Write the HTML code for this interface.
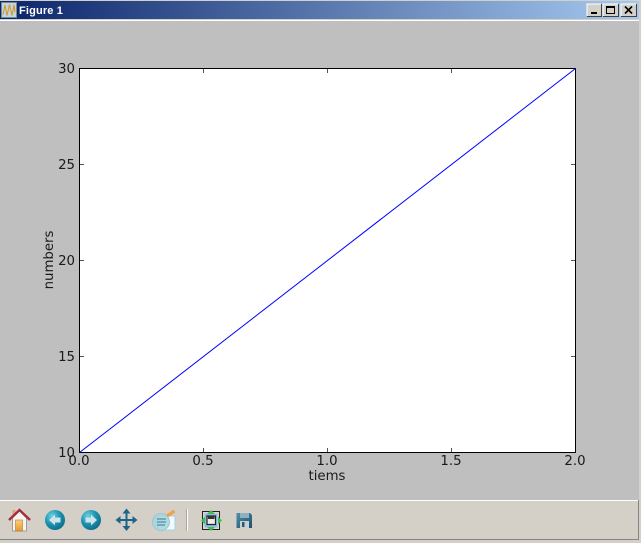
<!DOCTYPE html>
<html>
<head>
<meta charset="utf-8">
<style>
html,body{margin:0;padding:0;background:#bfbfbf}
body{width:641px;height:543px;overflow:hidden;position:relative}
svg{position:absolute;left:0;top:0}
text{font-family:"DejaVu Sans",sans-serif;font-size:13.3px;fill:#1a1a1a}
.t{font-family:"Liberation Sans",sans-serif;font-size:11px;font-weight:bold;fill:#fff;letter-spacing:0.15px}
</style>
</head>
<body>
<svg width="641" height="543" viewBox="0 0 641 543" xmlns="http://www.w3.org/2000/svg">
<defs>
<linearGradient id="tb" x1="0" x2="1" y1="0" y2="0"><stop offset="0" stop-color="#0a246a"/><stop offset="1" stop-color="#a6caf0"/></linearGradient>
<radialGradient id="ball" cx="0.35" cy="0.3" r="0.8"><stop offset="0" stop-color="#6fd0e0"/><stop offset="0.5" stop-color="#1b93b0"/><stop offset="1" stop-color="#0c6585"/></radialGradient>
<linearGradient id="door" x1="0" x2="0" y1="0" y2="1"><stop offset="0" stop-color="#fbd27a"/><stop offset="1" stop-color="#e9962e"/></linearGradient>
<linearGradient id="disk" x1="0" x2="1" y1="0" y2="1"><stop offset="0" stop-color="#4f8fae"/><stop offset="1" stop-color="#1d4f6c"/></linearGradient>
</defs>
<rect width="641" height="543" fill="#bfbfbf"/>
<rect x="0" y="0" width="641" height="1" fill="#d4d0c8"/>
<rect x="0" y="1" width="641" height="18" fill="url(#tb)"/>
<rect x="0" y="19" width="641" height="1" fill="#d4d0c8"/>
<rect x="0" y="20" width="639" height="1" fill="#ffffff"/>
<rect x="639" y="0" width="2" height="543" fill="#d4d0c8"/>

<rect x="1.5" y="2.5" width="15" height="15" fill="#c3d6dc" stroke="#6d8a9c" stroke-width="1"/>
<path d="M3 14.5L5 5L7 15.5L9.5 4.5L12 15.5L14 5L15 12" fill="none" stroke="#d8961f" stroke-width="1"/>
<text class="t" x="19" y="14">Figure 1</text>

<g>
<rect x="587" y="4" width="14" height="12" fill="#d4d0c8"/>
<path d="M587 16V4H601" fill="none" stroke="#fff"/>
<path d="M587 16.5H601.5V4" fill="none" stroke="#404040"/>
<rect x="591" y="12" width="6" height="2" fill="#000"/>
<rect x="603" y="4" width="15" height="12" fill="#d4d0c8"/>
<path d="M603 16V4H618" fill="none" stroke="#fff"/>
<path d="M603 16.5H618.5V4" fill="none" stroke="#404040"/>
<rect x="606.5" y="6.5" width="8" height="7" fill="none" stroke="#000"/>
<rect x="606" y="6" width="9" height="2" fill="#000"/>
<rect x="621" y="4" width="15" height="12" fill="#d4d0c8"/>
<path d="M621 16V4H636" fill="none" stroke="#fff"/>
<path d="M621 16.5H636.5V4" fill="none" stroke="#404040"/>
<path d="M625 6.5L632 13.5M632 6.5L625 13.5" stroke="#000" stroke-width="1.6"/>
</g>

<rect x="79.5" y="68.5" width="496" height="384" fill="#fff" stroke="#000" stroke-width="1"/>
<path d="M79.5 452.5L575.5 68.5" stroke="#0000ff" stroke-width="1" fill="none"/>
<path d="M203.5 452V448M327.5 452V448M451.5 452V448M203.5 69V73M327.5 69V73M451.5 69V73M80 356.5H84M80 260.5H84M80 164.5H84M575 356.5H571M575 260.5H571M575 164.5H571" stroke="#555" stroke-width="1"/>

<g text-anchor="end">
<text x="75" y="73">30</text>
<text x="75" y="169">25</text>
<text x="75" y="265">20</text>
<text x="75" y="361">15</text>
<text x="75" y="457">10</text>
</g>
<g text-anchor="middle">
<text x="79" y="465">0.0</text>
<text x="203" y="465">0.5</text>
<text x="327" y="465">1.0</text>
<text x="451" y="465">1.5</text>
<text x="575" y="465">2.0</text>
<text x="327" y="480">tiems</text>
<text transform="translate(53,260) rotate(-90)">numbers</text>
</g>

<rect x="0" y="500" width="639" height="1" fill="#fff"/>
<rect x="0" y="501" width="639" height="38" fill="#d4d0c8"/>
<rect x="0" y="539" width="639" height="1" fill="#858585"/>
<rect x="638" y="500" width="1" height="40" fill="#858585"/>
<rect x="0" y="540" width="641" height="3" fill="#d4d0c8"/>

<!-- home -->
<rect x="12.5" y="510" width="3" height="7" fill="#d9a878"/>
<path d="M12.5 518L19.5 511L26.5 518V531H12.5Z" fill="#f4f4f2" stroke="#8a8a8a" stroke-width="0.8"/>
<path d="M9 520L19.5 510L30 520" fill="none" stroke="#a92a3c" stroke-width="2.4"/>
<rect x="15.5" y="520" width="7" height="11" fill="url(#door)" stroke="#b9772a" stroke-width="0.6"/>

<!-- back -->
<circle cx="55" cy="520" r="10" fill="url(#ball)"/>
<path d="M49 520L55 514.5V517.5H60.5V522.5H55V525.5Z" fill="#cfe3ea"/>
<!-- forward -->
<circle cx="91" cy="520" r="10" fill="url(#ball)"/>
<path d="M97 520L91 514.5V517.5H85.5V522.5H91V525.5Z" fill="#cfe3ea"/>
<!-- move -->
<path d="M117 520H136M126.5 510.5V529.5" stroke="#1f6488" stroke-width="2"/>
<path d="M126.5 508.5L122.5 513.5H130.5ZM126.5 531L122.5 526H130.5ZM115.5 520L120.5 516V524ZM137.5 520L132.5 516V524Z" fill="#1f6488"/>

<!-- edit -->
<rect x="158" y="516" width="17" height="14" fill="#f2f8fb" stroke="#a8d0de" stroke-width="1"/>
<circle cx="161" cy="522" r="8.5" fill="#a9d5dd" fill-opacity="0.9" stroke="#8cc4d0" stroke-width="0.8"/>
<path d="M157 519H166M157 522H166M157 525H165" stroke="#4f8ea6" stroke-width="1.2"/>
<path d="M167 516L174.5 511" stroke="#efa24b" stroke-width="3.2"/>

<!-- separator -->
<rect x="186" y="509" width="1" height="22" fill="#a8a59e"/>
<rect x="187" y="509" width="1" height="22" fill="#fff"/>

<!-- subplots -->
<rect x="202.5" y="511.5" width="17" height="18" fill="#d8d8d2" stroke="#222" stroke-width="1"/>
<rect x="204.5" y="513.5" width="13" height="14" fill="#8fbbe6"/>
<rect x="207" y="516" width="8.5" height="8.5" fill="#ecebe6" stroke="#222" stroke-width="1.2"/>
<rect x="208" y="516" width="6.5" height="3" fill="#333"/>
<path d="M211 510L207 514H215ZM211 531L207 527H215ZM201 520.5L205 516.5V524.5ZM222 520.5L218 516.5V524.5Z" fill="#3cc04e"/>

<!-- save -->
<path d="M236.5 513H250L252 515V528H236.5Z" fill="url(#disk)"/>
<rect x="240" y="513" width="9" height="5" fill="#8fb0c0"/>
<rect x="240" y="521" width="9" height="7" fill="#c8d0d4"/>
<rect x="242" y="522" width="2.5" height="5" fill="#33566c"/>
</svg>
</body>
</html>
